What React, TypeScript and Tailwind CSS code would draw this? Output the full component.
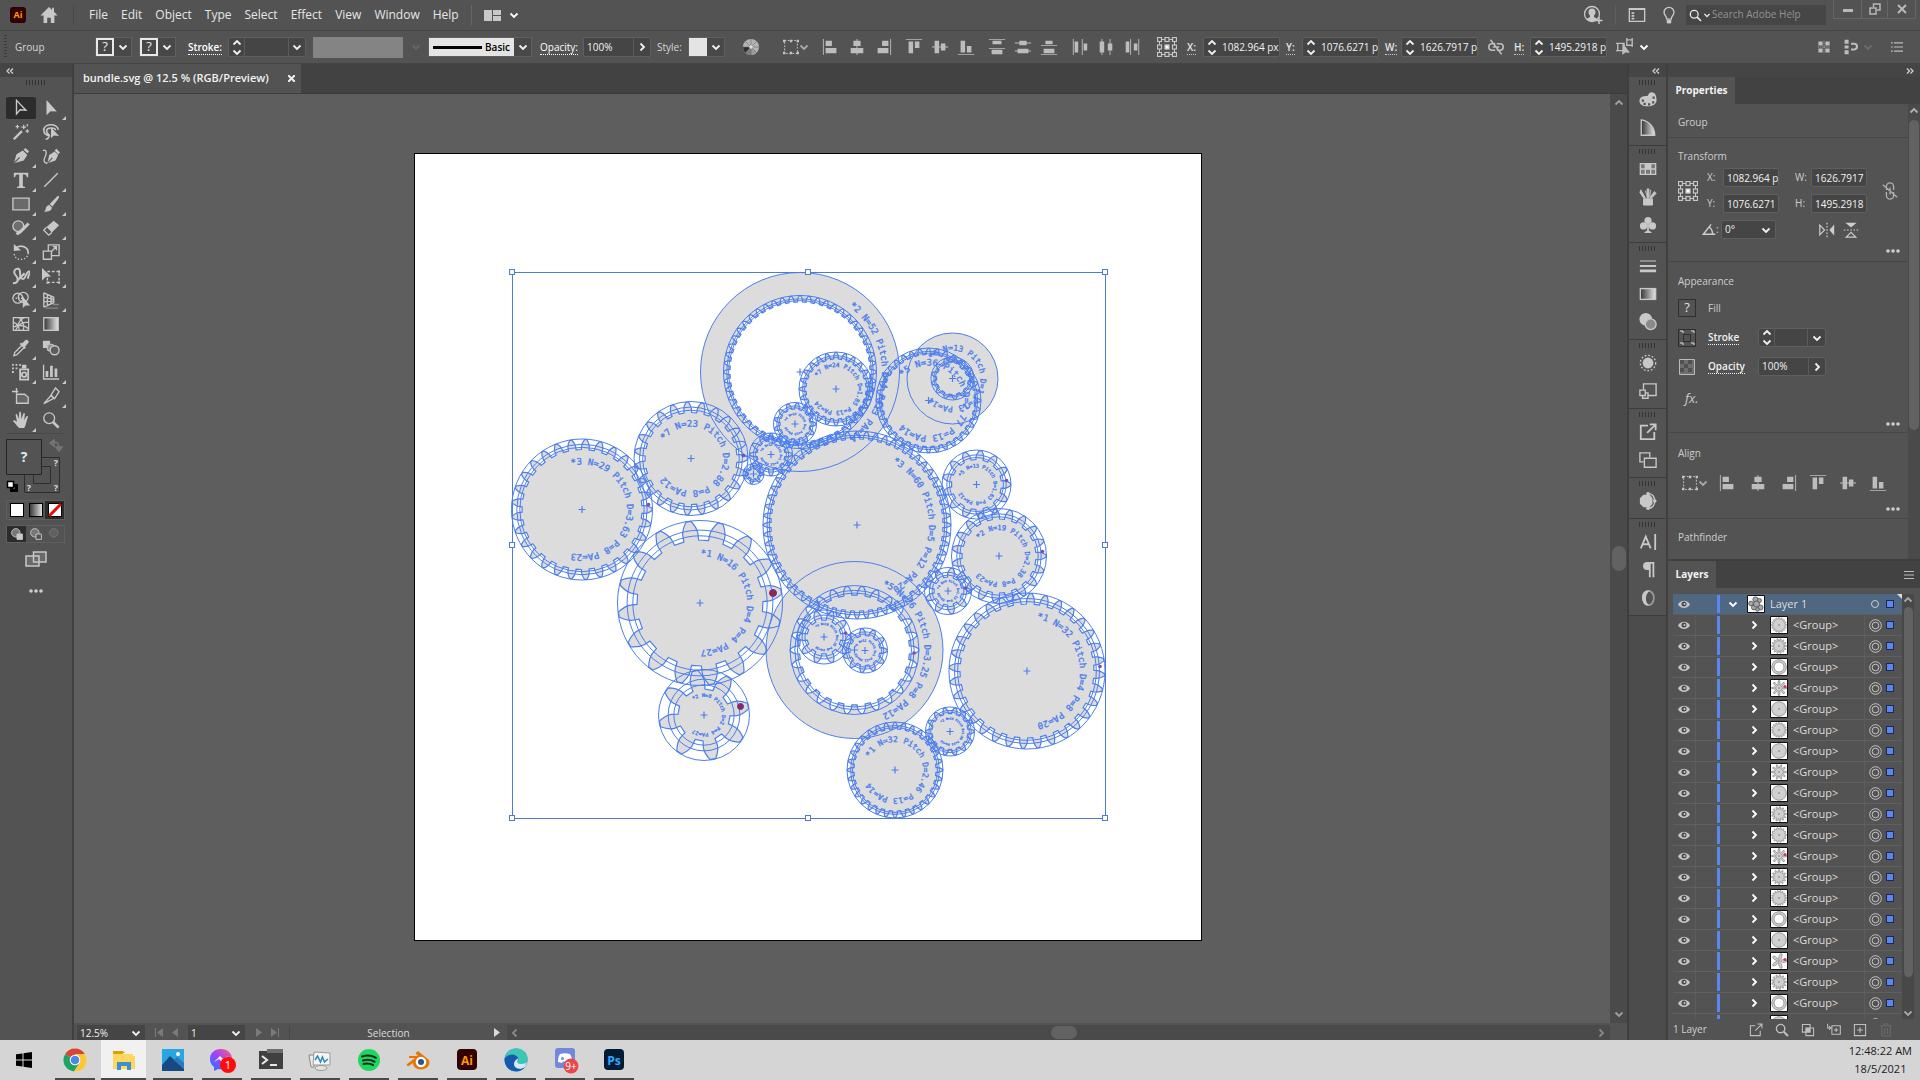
import React from "react";

/* ---------- shared icon helpers ---------- */

type IconProps = { size?: number; className?: string; children: React.ReactNode };

function Icon({ size = 20, className = "", children }: IconProps) {
  return (
    <svg
      width={size}
      height={size}
      viewBox="0 0 20 20"
      fill="none"
      stroke="currentColor"
      strokeWidth="1.5"
      className={"shrink-0 " + className}
      aria-hidden="true"
    >
      {children}
    </svg>
  );
}

const F = { fill: "currentColor", stroke: "none" };

function Chevron({ dir = "down", className = "" }: { dir?: "down" | "up" | "right" | "left"; className?: string }) {
  const d = {
    down: "M1.5 3.5 5 7l3.500-3.500",
    up: "M1.500 6.500 5 3l3.500 3.500",
    right: "M3.500 1.500 7 5 3.500 8.500",
    left: "M6.500 1.500 3 5l3.500 3.500",
  }[dir];
  return (
    <svg width="10" height="10" viewBox="0 0 10 10" fill="none" stroke="currentColor" strokeWidth="1.8" className={"shrink-0 " + className} aria-hidden="true">
      <path d={d} />
    </svg>
  );
}

function Collapse({ right = false }: { right?: boolean }) {
  return (
    <svg width="8" height="6" viewBox="0 0 8 6" fill="none" stroke="#d0d0d0" strokeWidth="1.3" aria-hidden="true">
      <path d={right ? "M1 .5 3.500 3 1 5.500M4.500 .5 7 3 4.500 5.500" : "M3.500 .5 1 3l2.500 2.500M7 .5 4.500 3 7 5.500"} />
    </svg>
  );
}

function Grip({ n = 6 }: { n?: number }) {
  return (
    <span className="flex gap-px" aria-hidden="true">
      {Array.from({ length: n }, (_, i) => (
        <span key={i} className="h-[5px] w-[2px] border-l border-[#343434]" />
      ))}
    </span>
  );
}

function RefPoint({ size = 20 }: { size?: number }) {
  const pts = [2.5, 10, 17.5];
  return (
    <Icon size={size}>
      <path d="M2.500 2.500h15v15h-15z" strokeWidth="1" />
      {pts.map((x) =>
        pts.map((y) => (
          <rect key={x + "-" + y} x={x - 2} y={y - 2} width="4" height="4" strokeWidth="1.200" fill={x === 10 && y === 10 ? "#fff" : "#535353"} />
        )),
      )}
    </Icon>
  );
}

const alignPaths: Record<string, [string, string]> = {
  left: ["Horizontal Align Left", "M1 1h1v18H1zM4 3h7v6H4zM4 11h12v6H4z"],
  hcenter: ["Horizontal Align Center", "M9.500 1h1v18h-1zM6 3h8v6H6zM3 11h14v6H3z"],
  right: ["Horizontal Align Right", "M18 1h1v18h-1zM9 3h7v6H9zM4 11h12v6H4z"],
  top: ["Vertical Align Top", "M1 1h18v1H1zM4 4h5v13H4zM11 4h5v7h-5z"],
  vcenter: ["Vertical Align Center", "M1 9.500h18v1H1zM4 3h5v14H4zM11 6h5v8h-5z"],
  bottom: ["Vertical Align Bottom", "M1 18h18v1H1zM4 3h5v13H4zM11 9h5v7h-5z"],
  dtop: ["Distribute Top", "M1 1h18v1H1zM5 3h10v4H5zM1 11h18v1H1zM4 13h12v5H4z"],
  dvc: ["Distribute Vertical Center", "M1 5h18v1H1zM6 3h8v5H6zM1 14h18v1H1zM4 12h12v5H4z"],
  dbottom: ["Distribute Bottom", "M1 8h18v1H1zM6 3h8v4H6zM1 18h18v1H1zM4 12h12v5H4z"],
  dleft: ["Distribute Left", "M2 1h1v18H2zM4 4h4v12H4zM12 1h1v18h-1zM14 6h4v8h-4z"],
  dhc: ["Distribute Horizontal Center", "M5 1h1v18H5zM3 4h5v12H3zM14 1h1v18h-1zM12 6h5v8h-5z"],
  dright: ["Distribute Right", "M8 1h1v18H8zM3 4h4v12H3zM17 1h1v18h-1zM12 6h4v8h-4z"],
};

function AlignButton({ kind }: { kind: string }) {
  return (
    <button type="button" aria-label={alignPaths[kind][0]} className="flex w-[18px] items-center justify-center text-[#bdbdbd]">
      <Icon size={18}>
        <path d={alignPaths[kind][1]} {...F} />
      </Icon>
    </button>
  );
}

function AlignTo() {
  return (
    <button type="button" aria-label="Align To" className="flex items-center text-[#c2c2c2]">
      <Icon size={16}>
        <path d="M2 2h16v16H2z" strokeWidth="1.300" strokeDasharray="2 2" />
        <path d="M0 1h3v3H0zM8.500 1h3v3h-3zM17 1h3v3h-3zM0 16h3v3H0zM8.500 16h3v3h-3zM17 16h3v3h-3z" {...F} />
      </Icon>
      <Chevron className="text-[#a8a8a8]" />
    </button>
  );
}

const fieldBox = "rounded-[2px] border border-[#5f5f5f] bg-[#454545]";

function Spinner() {
  return (
    <span className="flex w-[15px] flex-col items-center justify-center text-[#f0f0f0]">
      <button type="button" aria-label="Increase" className="flex h-[9px] items-center"><Chevron dir="up" /></button>
      <button type="button" aria-label="Decrease" className="flex h-[9px] items-center"><Chevron /></button>
    </span>
  );
}

function DropDown({ label, value, className = "" }: { label: string; value: string; className?: string }) {
  return (
    <span className={"grid items-center text-[#f0f0f0] " + className}>
      <select aria-label={label} defaultValue={value} className="col-start-1 row-start-1 h-full w-full appearance-none bg-transparent pl-[3px] outline-none">
        <option value={value}>{value}</option>
      </select>
      <span className="pointer-events-none col-start-1 row-start-1 flex w-[18px] items-center justify-center justify-self-end">
        <Chevron />
      </span>
    </span>
  );
}

function Coord({ label, value }: { label: string; value: string }) {
  const id = "bar-" + label;
  return (
    <span className="flex items-center">
      <label htmlFor={id} className="w-[16px] border-dotted border-[#c8c8c8] font-semibold text-[#e4e4e4]">
        <span className="border-b border-dotted border-[#c8c8c8]">{label}:</span>
      </label>
      <span className={"flex h-5 w-[77px] " + fieldBox}>
        <Spinner />
        <input id={id} defaultValue={value} className="w-0 flex-1 bg-transparent pl-[3px] text-[#f2f2f2] outline-none" />
      </span>
    </span>
  );
}

/* ---------- top bars ---------- */

const menus = ["File", "Edit", "Object", "Type", "Select", "Effect", "View", "Window", "Help"];

function MenuBar() {
  return (
    <header className="flex h-[30px] shrink-0 items-center bg-[#535353] text-xs text-[#e6e6e6]">
      <span className="ml-[10px] flex h-4 w-4 items-center justify-center rounded-[3px] bg-[#330000] text-[9px] font-bold text-[#ff9a00]">Ai</span>
      <button type="button" aria-label="Home" className="ml-[14px] text-[#c8c8c8]">
        <Icon size={18}>
          <path d="M10 1 .5 10.500H4V19h4v-6h4v6h4v-8.500h3.500L15.500 6.500V2h-2v2.500z" {...F} />
        </Icon>
      </button>
      <span className="ml-[15px] h-5 w-px bg-[#484848]" />
      <nav className="ml-[15px] flex gap-[13px] pb-px">
        {menus.map((m) => (
          <button type="button" key={m}>{m}</button>
        ))}
      </nav>
      <span className="ml-3 h-5 w-px bg-[#666]" />
      <button type="button" aria-label="Arrange Documents" className="ml-3 flex items-center gap-2 text-[#c8c8c8]">
        <svg width="17" height="11" viewBox="0 0 17 11" fill="currentColor" aria-hidden="true"><path d="M0 0h8v11H0zM9 0h8v5H9zM9 6h8v5H9z" /></svg>
        <Chevron className="text-white" />
      </button>
      <div className="ml-auto flex h-full items-center text-[#c8c8c8]">
        <button type="button" aria-label="Account">
          <Icon size={20}>
            <circle cx="9" cy="9" r="7.500" strokeWidth="1.300" />
            <path d="M9 3.500c2.300 0 3.500 1.600 3.500 3.800 0 1.500-.7 2.600-1.500 3.300v1.500c1 .6 3 1 3 2.200L9 17l-5-2.500c0-1.200 2-1.800 3-2.400v-1.500c-.8-.7-1.500-1.800-1.500-3.300C5.500 5.100 6.700 3.500 9 3.500z" {...F} />
            <path d="M16 12v7M12.500 15.500h7" strokeWidth="1.500" />
          </Icon>
        </button>
        <span className="mx-3 h-5 w-px bg-[#5e5e5e]" />
        <button type="button" aria-label="Workspace layout">
          <Icon size={18}>
            <path d="M1.500 3h17v14h-17zM1.500 3.800h17" />
            <path d="M4 7h3v2H4zM4 10h3v2H4zM4 13h3v2H4z" {...F} />
          </Icon>
        </button>
        <button type="button" aria-label="Learn" className="ml-[14px]">
          <Icon size={18}>
            <path d="M7.500 14.500c0-3-3-4-3-7.500a5.500 5.500 0 0 1 11 0c0 3.500-3 4.500-3 7.500z" />
            <path d="M7.500 15.500h5v3l-1 1h-3l-1-1z" {...F} />
          </Icon>
        </button>
        <label className="ml-2 flex h-5 w-[140px] items-center bg-[#464646] pl-[3px]">
          <Icon size={13} className="text-[#e8e8e8]"><circle cx="8" cy="8" r="6" strokeWidth="2" /><path d="m12.500 12.500 6 6" strokeWidth="2.500" /></Icon>
          <Chevron className="scale-75 text-[#e8e8e8]" />
          <input aria-label="Search Adobe Help" placeholder="Search Adobe Help" className="w-0 flex-1 bg-transparent text-[10px] text-white outline-none placeholder:text-[#929292]" />
        </label>
        <div className="ml-[7px] mr-1 flex h-[19px] self-start border border-t-0 border-[#666] text-[#b8b8b8]">
          <button type="button" aria-label="Minimize" className="flex w-[27px] items-center justify-center"><svg width="10" height="10" aria-hidden="true"><path d="M0 5h10v3H0z" fill="currentColor" /></svg></button>
          <button type="button" aria-label="Restore" className="flex w-[27px] items-center justify-center border-x border-[#666]"><svg width="12" height="12" fill="none" stroke="currentColor" strokeWidth="1.500" aria-hidden="true"><path d="M1 5h6v6H1zM4.500 4V1H11v6H8" /></svg></button>
          <button type="button" aria-label="Close" className="flex w-[27px] items-center justify-center"><svg width="10" height="10" fill="none" stroke="currentColor" strokeWidth="2" aria-hidden="true"><path d="m1 1 8 8M9 1 1 9" /></svg></button>
        </div>
      </div>
    </header>
  );
}

function Swatch({ label, children, light = false }: { label: string; children?: React.ReactNode; light?: boolean }) {
  return (
    <button type="button" aria-label={label} className="flex h-5 border border-[#5f5f5f] bg-[#484848]">
      <span className={"flex h-full w-[18px] items-center justify-center border-2 text-[13px] " + (light ? "border-[#e4e4e4] bg-[#e4e4e4]" : "border-[#e8e8e8] bg-[#484848] text-[#e8e8e8]")}>{children}</span>
      <span className="flex h-full w-[17px] items-center justify-center text-[#f0f0f0]"><Chevron /></span>
    </button>
  );
}

function Sep() {
  return <span className="h-6 w-px bg-[#4a4a4a]" />;
}

function ControlBar() {
  return (
    <div className="flex h-[34px] shrink-0 items-center border-y border-[#444] bg-[#535353] text-[10px] text-[#d6d6d6]">
      <span className="ml-1 h-6 w-[11px] bg-[repeating-linear-gradient(#3a3a3a_0_1px,transparent_1px_3px)] bg-[length:3px_100%] bg-no-repeat" />
      <span className="w-20">Group</span>
      <Swatch label="Fill">?</Swatch>
      <span className="ml-[7px]"><Swatch label="Stroke color">?</Swatch></span>
      <label htmlFor="bar-stroke" className="ml-3 w-10 font-semibold text-white"><span className="border-b border-dotted">Stroke:</span></label>
      <span className={"flex h-5 w-[78px] " + fieldBox}>
        <Spinner />
        <input id="bar-stroke" className="w-0 flex-1 border-x border-[#5a5a5a] bg-transparent outline-none" />
        <button type="button" aria-label="Stroke weights" className="flex w-4 items-center justify-center text-[#f0f0f0]"><Chevron /></button>
      </span>
      <span className="ml-[7px] h-[21px] w-[90px] bg-[#848484]" />
      <span className="flex w-[25px] justify-center text-[#656565]"><Chevron /></span>
      <button type="button" aria-label="Brush definition" className="flex h-5 w-[104px] border border-[#5f5f5f] bg-[#484848]">
        <span className="flex h-full flex-1 items-center justify-between bg-[#e4e4e4] px-1 font-semibold text-black"><span className="h-[3px] w-[49px] bg-black" />Basic</span>
        <span className="flex h-full w-[17px] items-center justify-center text-[#f0f0f0]"><Chevron /></span>
      </button>
      <label htmlFor="bar-opacity" className="ml-2 w-[43px] text-white"><span className="border-b border-dotted">Opacity:</span></label>
      <span className={"flex h-5 w-[68px] " + fieldBox}>
        <input id="bar-opacity" defaultValue="100%" className="w-0 flex-1 bg-transparent pl-[3px] text-[#f2f2f2] outline-none" />
        <button type="button" aria-label="Opacity slider" className="flex w-[17px] items-center justify-center border-l border-[#5a5a5a] text-[#f0f0f0]"><Chevron dir="right" /></button>
      </span>
      <span className="ml-[6px] w-[31px]">Style:</span>
      <Swatch label="Graphic style" light />
      <span className="ml-2"><Sep /></span>
      <button type="button" aria-label="Recolor artwork" className="ml-[9px] text-[#c8c8c8]">
        <Icon size={18}>
          <circle cx="10" cy="10" r="9" fill="#b4b4b4" stroke="none" />
          <path d="M10 10H1A9 9 0 0 0 4 16.700z" fill="#2e2e2e" stroke="none" />
          <path d="M10 10 4 16.700A9 9 0 0 0 10 19z" fill="#7c7c7c" stroke="none" />
          <path d="M10 10v9a9 9 0 0 0 6.400-2.600z" fill="#9a9a9a" stroke="none" />
          <path d="M10 1v18M1 10h18M3.600 3.600l12.800 12.800M16.400 3.600 3.600 16.400" stroke="#6c6c6c" strokeWidth=".7" />
          <circle cx="10" cy="10" r="2" fill="#ddd" stroke="none" />
        </Icon>
      </button>
      <span className="ml-[10px]"><Sep /></span>
      <span className="ml-[13px]"><AlignTo /></span>
      <div className="ml-[13px] flex gap-[13px]">
        {[["left", "hcenter", "right"], ["top", "vcenter", "bottom"], ["dtop", "dvc", "dbottom"], ["dleft", "dhc", "dright"]].map((g) => (
          <span key={g[0]} className="flex gap-2">
            {g.map((k) => <AlignButton key={k} kind={k} />)}
          </span>
        ))}
      </div>
      <span className="ml-3"><Sep /></span>
      <button type="button" aria-label="Reference point" className="ml-1 mr-[10px] text-[#c6c6c6]"><RefPoint /></button>
      <div className="flex items-center gap-[6px]">
        <Coord label="X" value="1082.964 px" />
        <Coord label="Y" value="1076.6271 p" />
        <Coord label="W" value="1626.7917 p" />
        <button type="button" aria-label="Constrain proportions" className="mx-1 text-[#bdbdbd]">
          <Icon size={16}><path d="M9 6H5a4 4 0 0 0 0 8h4M11 6h4a4 4 0 0 1 0 8h-4M6 10h8M3 1l14 18" strokeWidth="2" /></Icon>
        </button>
        <Coord label="H" value="1495.2918 p" />
      </div>
      <button type="button" aria-label="Isolate selected" className="ml-[9px] flex items-center gap-[5px] text-[#bdbdbd]">
        <Icon size={18}><path d="M2 6h7v8H2zM12 2h6v6h-6zM0 6h2M0 14h2M18 0v2M18 8v2M12 0v2" /><path d="M7 5v14l3.500-3 5 .5z" {...F} /></Icon>
        <Chevron className="text-white" />
      </button>
      <div className="ml-auto mr-[17px] flex items-center text-[#bdbdbd]">
        <button type="button" aria-label="Snap to grid"><Icon size={14}><path d="M2 2h6v6H2zM12 2h6v6h-6zM2 12h6v6H2zM12 12h6v6h-6z" {...F} /><path d="M10 1v18M1 10h18" strokeWidth="1" strokeDasharray="2 1" /></Icon></button>
        <button type="button" aria-label="Snap options" className="ml-3 flex items-center gap-1"><Icon size={16}><path d="M2 1h5v5H2zM2 8h5v4H2zM2 14h5v5H2z" {...F} /><path d="M10 6h4a3.500 3.500 0 0 1 0 7h-4" strokeWidth="2.500" /></Icon><Chevron className="text-[#6b6b6b]" /></button>
        <button type="button" aria-label="Bar menu" className="ml-[18px]"><Icon size={12}><path d="M0 3h3M0 10h3M0 17h3M5 3h15M5 10h15M5 17h15" strokeWidth="2" /></Icon></button>
      </div>
    </div>
  );
}

/* ---------- tool panel ---------- */

const arrow = "M5 1v17l4.500-4.500 7 .5z";

const tools: [string, React.ReactNode, boolean][] = [
  ["Selection", <path key="a" d="M5 1.500v15l4-4.500 6.500.5z" />, false],
  ["Direct Selection", <path key="a" d={arrow} {...F} />, true],
  ["Magic Wand", <g key="a"><path d="m2 18 9-9" strokeWidth="2.500" /><path d="M13 2v5M10.500 4.500h5M17 7v4M15 9h4M6 2v4M4 4h4M17 1v3" strokeWidth="1.300" /></g>, false],
  ["Lasso", <g key="a"><path d="M9 14c-5 0-7-3-7-6 0-4 4-6 8-6s8 2 8 5.500M5 9c0-2 2-3.500 5-3.500s5 1 5 2.500M5 9c0 3 3 3 3 5s-2 4-4 4" strokeWidth="1.800" /><path d="M10 5v12l3-3 6 .5z" {...F} /></g>, false],
  ["Pen", <g key="a"><path d="M2 18 5 8l7-4 5 5-4 6zM13 3l2-2 4 4-2 2z" {...F} /><path d="m2.500 17.500 6-6" stroke="#535353" strokeWidth="1.200" /></g>, true],
  ["Curvature", <g key="a"><path d="M6 18 8 9l6-4 4 4-3 6zM14 4l2-2 4 4-2 2z" {...F} /><path d="m6.500 17.500 5-5.500" stroke="#535353" strokeWidth="1.200" /><path d="M1 4c5-2 4 4 2 8s0 6 3 6" /></g>, false],
  ["Type", <path key="a" d="M2 2h16v5h-1.500C16 4.500 15.500 4 12 4v12c0 1 .5 1.500 2.500 1.500V19h-9v-1.500C7.500 17.500 8 17 8 16V4C4.500 4 4 4.500 3.500 7H2z" {...F} />, true],
  ["Line Segment", <path key="a" d="M2.500 17.500 17.500 2.500" strokeWidth="1.500" />, true],
  ["Rectangle", <path key="a" d="M1 3.500h18v13H1z" fill="#6a6a6a" />, true],
  ["Paintbrush", <g key="a"><path d="M18.500 1c1 1 0 2.500-1 4l-6 8-3-3 7-7c1-1 2-2.500 3-2zM8 11l3 3c0 3-3 5-9 4.500 2.500-1 1.500-3 3-5.500C6 11.500 7 11 8 11z" {...F} /></g>, true],
  ["Shaper", <g key="a"><circle cx="7" cy="8" r="6" fill="#6e6e6e" /><path d="m18.500 5-9 9-3 2-1.500-1" strokeWidth="3.500" /></g>, true],
  ["Eraser", <g key="a"><path d="m13 2 6 5-8 8-6-6z" {...F} /><path d="m5 9-3 3.500L7.500 18l3.500-3" /></g>, true],
  ["Rotate", <g key="a"><path d="M4 6c5-5 14-2 14 5" strokeWidth="2" /><path d="M18 11c0 9-15 10-15.500 1" strokeWidth="1.500" strokeDasharray="1.500 2" /><path d="M2 1v8l8-1z" {...F} /></g>, true],
  ["Scale", <path key="a" d="M1.500 9h9v9h-9zM7 9V2h12v12h-8M10 10l6-6M12 4h4v4" />, true],
  ["Width", <g key="a"><path d="M1 18c7 0 6-6 3-9S3 1 7 2s0 9 4 11 5-9 8-8-2 4-1 8" strokeWidth="2.200" /><path d="m6 15 8-8" strokeWidth="2.500" /></g>, true],
  ["Free Transform", <g key="a"><path d="M6 5h13v12H6z" strokeDasharray="3 2" /><path d="M18 4h2.500v2.500H18zM18 16h2.500v2.500H18zM5 16h2.500v2.500H5z" {...F} /><path d="M0 1v14l4-4 6-.5z" {...F} /></g>, true],
  ["Shape Builder", <g key="a"><circle cx="6.500" cy="8" r="5.500" /><circle cx="12.500" cy="7" r="5.500" /><path d="M4 8h9" strokeDasharray="1.500 1.500" /><path d="M12 6v13l3-3 5 0z" {...F} /></g>, true],
  ["Perspective Grid", <g key="a"><path d="M2 2v16M2 2l11 5v6L2 18M2 7l11 2M2 12l11-1M6 4v12M10 6v8" /><path d="M4 19h14M12 15h7" stroke="#888" /></g>, true],
  ["Mesh", <path key="a" d="M1.500 3h17v14h-17zM1.500 13c7 1 5-9 13-10M4 17c2-5 6-9 14-9M8 17c0-6-4-8-6.500-9M12 17c2-2 2-8-4-14M7 12c5-1 8 0 11 3" strokeWidth="1.400" />, false],
  ["Gradient", <g key="a"><rect x="2" y="3" width="16" height="14" fill="url(#ramp)" /></g>, false],
  ["Eyedropper", <g key="a"><path d="m11 5 4-4c2-1 4 1 3.500 3l-4 4.500 1 1-1.500 1.500L8.500 5.500 10 4z" {...F} /><path d="m11 7-8 8-1 3.500 3.500-1 8-8" /></g>, true],
  ["Blend", <g key="a"><path d="M1 2h8v8H1z" {...F} /><rect x="6" y="6" width="7" height="7" rx="2.500" fill="#8c8c8c" stroke="#bbb" /><circle cx="14" cy="12.500" r="5" fill="#5d5d5d" /></g>, false],
  ["Symbol Sprayer", <g key="a"><path d="M9 7h9v11.500H9z" strokeWidth="2" /><circle cx="13.500" cy="13" r="2.500" strokeWidth="2" /><path d="M11 2h5v4h-5zM0 1h2v2H0zM4 1h2v2H4zM8 1h2v2H8zM0 5h2v2H0zM4 5h2v2H4zM0 9h2v2H0z" {...F} /></g>, true],
  ["Column Graph", <path key="a" d="M1 2h1.500v15H19v1.500H1zM4 9h3v6.500H4zM9 3h3v12.500H9zM14 6h3v9.500h-3z" {...F} />, true],
  ["Artboard", <path key="a" d="M5 1v6M0 5h7M7 8h7l4 3.500V18H5V8z" fill="#666" />, false],
  ["Slice", <g key="a"><path d="m2 18.500 8-9 3 3zM10 9l5-8 4 4-5 8z" /></g>, true],
  ["Hand", <path key="a" d="M8 19c-2-2-4-5-7-8 1-1.500 2.500-.5 4.500 1L4 4.500c0-1.500 1.600-1.500 2 0L7.500 9 8 2c0-1.500 2-1.500 2 0l.5 7L12.500 3c.3-1.200 2-.8 1.800.5L13.500 10l2.500-4c.7-1 2-.3 1.700.8L15.500 14c-.5 2.500-1 3.500-2 5z" {...F} />, true],
  ["Zoom", <g key="a"><circle cx="8" cy="8" r="6" /><path d="m12.500 12.500 6 6" strokeWidth="3" /></g>, false],
];

function ToolPanel() {
  return (
    <aside className="flex w-[74px] shrink-0 flex-col border-r-2 border-[#404040] bg-[#535353] text-[#c8c8c8]">
      <div className="flex h-[13px] shrink-0 items-center bg-[#454545] pl-[6px]"><Collapse /></div>
      <div className="flex h-[19px] justify-center pt-[3px]"><Grip n={7} /></div>
      <div className="ml-[6px] grid w-[60px] grid-cols-2">
        {tools.map(([name, art, more], i) => (
          <button
            type="button"
            key={name}
            aria-label={name + " Tool"}
            className={"grid h-6 w-[30px] place-items-center rounded-[3px] " + (i === 0 ? "bg-[#2c2c2c] bg-clip-content py-px" : "")}
          >
            <Icon size={18} className="col-start-1 row-start-1">{art}</Icon>
            {more && (
              <svg width="4" height="4" className="col-start-1 row-start-1 self-end justify-self-end" aria-hidden="true"><path d="M4 0v4H0z" fill="currentColor" /></svg>
            )}
          </button>
        ))}
      </div>
      <div className="mx-[7px] mt-px h-[6px] border-t border-[#484848]" />
      <svg width="60" height="58" className="ml-[6px]" role="img" aria-label="Fill and stroke">
        <path d="M18.500 18.500h35v35h-35zM27.500 27.500h17v17h-17z" fill="none" stroke="#2e2e2e" />
        <path d="M.5 .5h35v35H.5z" fill="#535353" stroke="#262626" />
        <path d="M45 4c6-2 8 0 8 6M48 1l-4 3 4 3zM50 8h6l-3 4z" fill="none" stroke="#777" strokeWidth="1.500" />
        <text x="18" y="23" textAnchor="middle" fontSize="14" fontWeight="700" fill="#dcecf8">?</text>
        <text x="50" y="27" textAnchor="middle" fontSize="9" fontWeight="700" fill="#ddd">?</text>
        <text x="23" y="52" textAnchor="middle" fontSize="9" fontWeight="700" fill="#ddd">?</text>
        <text x="50" y="52" textAnchor="middle" fontSize="9" fontWeight="700" fill="#ddd">?</text>
        <path d="M5.500 46.500h5v5h-5z" fill="none" stroke="#000" strokeWidth="3" />
        <path d="M1.500 42.500h6v6h-6z" fill="#fff" stroke="#000" strokeWidth="1.500" />
      </svg>
      <div className="ml-[6px] mt-[3px] flex h-5 w-[59px] border border-[#5f5f5f]">
        {["Color", "Gradient", "None"].map((n, i) => (
          <button type="button" key={n} aria-label={n} className={"flex flex-1 items-center justify-center " + (i === 2 ? "bg-[#2c2c2c]" : "")}>
            <svg width="14" height="14" aria-hidden="true">
              <rect x=".5" y=".5" width="13" height="13" fill={i === 1 ? "url(#ramp)" : "#fff"} stroke="#000" />
              {i === 2 && <path d="m1 13 12-12" stroke="#e01010" strokeWidth="3" />}
            </svg>
          </button>
        ))}
      </div>
      <div className="ml-[6px] mt-[5px] flex h-[18px] w-[59px] border border-[#5f5f5f]">
        {["Draw Normal", "Draw Behind", "Draw Inside"].map((n, i) => (
          <button type="button" key={n} aria-label={n} className={"flex flex-1 items-center justify-center " + (i === 0 ? "bg-[#2c2c2c]" : i === 2 ? "text-[#777]" : "")}>
            <Icon size={12}>
              <circle cx="8" cy="8" r="7" fill={i === 2 ? "#606060" : "#777"} />
              {i < 2 && <path d="M10 10h9v9h-9z" fill={i === 0 ? "currentColor" : "#535353"} />}
            </Icon>
          </button>
        ))}
      </div>
      <button type="button" aria-label="Screen mode" className="mt-2 flex justify-center">
        <svg width="22" height="16" fill="#6a6a6a" stroke="#c8c8c8" strokeWidth="1.500" aria-hidden="true"><path d="M1 5h13v10H1zM8.500 1H21v10H8.500z" /></svg>
      </button>
      <button type="button" aria-label="Edit toolbar" className="mt-[22px] flex justify-center"><Dots /></button>
    </aside>
  );
}

function Dots() {
  return <svg width="14" height="4" fill="#cfcfcf" aria-hidden="true"><circle cx="2" cy="2" r="1.800" /><circle cx="7" cy="2" r="1.800" /><circle cx="12" cy="2" r="1.800" /></svg>;
}

/* ---------- artwork ---------- */

type Gear = { x: number; y: number; ro: number; ri: number; n: number; ring?: number; text?: string; tr?: number; fs?: number; ph?: number };

function gearPath(x: number, y: number, ro: number, ri: number, n: number, phase = 0) {
  const s = (Math.PI * 2) / n;
  const p = (a: number, r: number) => (x + r * Math.cos(a)).toFixed(2) + " " + (y + r * Math.sin(a)).toFixed(2);
  const h = ro - ri;
  let d = "";
  for (let i = 0; i < n; i++) {
    const a = i * s + phase;
    d += (i ? "L" : "M") + p(a - 0.3 * s, ri) + "L" + p(a - 0.28 * s, ri + h * 0.35);
    d += "Q" + p(a - 0.25 * s, ri + h * 0.65) + " " + p(a - 0.08 * s, ro);
    d += "L" + p(a + 0.08 * s, ro) + "Q" + p(a + 0.25 * s, ri + h * 0.65) + " " + p(a + 0.28 * s, ri + h * 0.35);
    d += "L" + p(a + 0.3 * s, ri);
  }
  return d + "Z";
}

const circlePath = (x: number, y: number, r: number) => `M${x - r} ${y}A${r} ${r} 0 1 1 ${x + r} ${y}A${r} ${r} 0 1 1 ${x - r} ${y}`;

const gears: Gear[] = [
  { x: 800, y: 372, ro: 76, ri: 70, n: 52, ring: 99.5, text: "*2 N=52 Pitch D=4 P=13 PA=14", tr: 82, fs: 9 },
  { x: 854.5, y: 650, ro: 64, ri: 55, n: 26, ring: 88.5, text: "*5 N=26 Pitch D=3.25 P=8 PA=12", tr: 70, fs: 9 },
  { x: 952.5, y: 378.5, ro: 21, ri: 16, n: 13, ring: 45.5, text: "*6 N=13 Pitch D=1 P=13 PA=14", tr: 28, fs: 8 },
  { x: 582, y: 509.5, ro: 70, ri: 60, n: 29, text: "*3 N=29 Pitch D=3.63 P=8 PA=23", tr: 45, fs: 9 },
  { x: 691, y: 458.5, ro: 56.5, ri: 46, n: 23, text: "*7 N=23 Pitch D=2.88 P=8 PA=12", tr: 32, fs: 9 },
  { x: 836, y: 389, ro: 36.5, ri: 30, n: 24, text: "*7 N=24 Pitch D=1.85 P=13 PA=24", tr: 22, fs: 6 },
  { x: 795, y: 424, ro: 21, ri: 15, n: 13, text: "*4 N=13 Pitch D=1 P=13 PA=24", tr: 9, fs: 3 },
  { x: 771, y: 454.5, ro: 21, ri: 14, n: 12, text: "*6 N=12 Pitch D=1 P=12 PA=20", tr: 9, fs: 3 },
  { x: 753.5, y: 474, ro: 10, ri: 5, n: 7 },
  { x: 857, y: 525, ro: 93.5, ri: 86, n: 60, text: "*3 N=60 Pitch D=5 P=12 PA=20", tr: 72, fs: 9 },
  { x: 928.5, y: 400.5, ro: 52, ri: 46, n: 36, text: "*5 N=36 Pitch D=2.77 P=13 PA=14", tr: 35, fs: 9 },
  { x: 976.5, y: 484.5, ro: 34, ri: 25, n: 13, text: "*5 N=13 Pitch D=1.63 P=8 PA=12", tr: 17, fs: 5 },
  { x: 999, y: 556, ro: 47, ri: 37, n: 19, text: "*2 N=19 Pitch D=2.38 P=8 PA=23", tr: 26, fs: 7 },
  { x: 948, y: 591, ro: 23, ri: 14, n: 9, text: "*4 N=9 Pitch D=1.13 P=8 PA=20", tr: 9, fs: 3 },
  { x: 1027, y: 671, ro: 77.5, ri: 67, n: 32, text: "*1 N=32 Pitch D=4 P=8 PA=20", tr: 53, fs: 9, ph: 0.05 },
  { x: 700, y: 603, ro: 82, ri: 63, n: 16, text: "*1 N=16 Pitch D=4 P=4 PA=27", tr: 47, fs: 9, ph: -0.14 },
  { x: 704, y: 715, ro: 45, ri: 26, n: 8, text: "*2 N=8 Pitch D=2 P=4 PA=27", tr: 18, fs: 5, ph: -0.2 },
  { x: 824, y: 637, ro: 26.5, ri: 17, n: 10, text: "*3 N=10 Pitch D=1.25 P=8 PA=20", tr: 12, fs: 3 },
  { x: 865, y: 650.5, ro: 22, ri: 15, n: 11, text: "*6 N=11 Pitch D=1 P=11 PA=20", tr: 9, fs: 3 },
  { x: 895, y: 770, ro: 47.5, ri: 41, n: 32, text: "*1 N=32 Pitch D=2.46 P=13 PA=14", tr: 28, fs: 8 },
  { x: 950, y: 731.5, ro: 24, ri: 18, n: 14, text: "*2 N=14 Pitch D=1.08 P=13 PA=14", tr: 12, fs: 3 },
];

const handles: [number, number][] = [[512, 272], [808, 272], [1105, 272], [512, 545], [1105, 545], [512, 818], [808, 818], [1105, 818]];

function Artwork() {
  return (
    <svg width="788" height="788" viewBox="414 153 788 788" className="block" role="img" aria-label="bundle.svg artwork: interlocking gears">
      <rect x="414.500" y="153.500" width="787" height="787" fill="#fff" stroke="#000" />
      <g fill="#dcdcdc" fillRule="evenodd">
        {gears.map((g, i) => (
          <path key={i} d={gearPath(g.x, g.y, g.ro, g.ri, g.n, g.ph) + (g.ring ? circlePath(g.x, g.y, g.ring) : "")} />
        ))}
      </g>
      <g fill="none" stroke="#4c7eee" strokeWidth="1">
        {gears.map((g, i) => {
          const h = g.ro - g.ri;
          return (
            <g key={i}>
              <path d={gearPath(g.x, g.y, g.ro, g.ri, g.n, g.ph)} strokeWidth="1.200" />
              <circle cx={g.x} cy={g.y} r={g.ro + 0.5} />
              <circle cx={g.x} cy={g.y} r={g.ri + h * 0.52} />
              <circle cx={g.x} cy={g.y} r={g.ri + h * 0.22} />
              {g.ring && <circle cx={g.x} cy={g.y} r={g.ring} />}
              <path d={`M${g.x - 3.5} ${g.y}h7M${g.x} ${g.y - 3.5}v7`} strokeWidth="1.200" />
              {g.text && <path id={"arc" + i} d={circlePath(g.x, g.y, g.tr!)} stroke="none" />}
            </g>
          );
        })}
      </g>
      <g fill="#4c7eee" stroke="#4c7eee" strokeWidth=".35" fontFamily="'DejaVu Sans Mono', monospace">
        {gears.map((g, i) =>
          g.text ? (
            <text key={i} fontSize={g.fs} textAnchor="middle">
              <textPath href={"#arc" + i} startOffset="50%">{g.text}</textPath>
            </text>
          ) : null,
        )}
      </g>
      <g fill="#b01838" stroke="#5a3c9a">
        <circle cx="773" cy="593" r="3.500" />
        <circle cx="740.500" cy="706.500" r="3" />
      </g>
      <path d="M773 590v6M740.500 704v5" stroke="#5a3c9a" />
      <g fill="#7a4fb0">
        <circle cx="1006.500" cy="480.500" r="1.800" /><circle cx="1042.500" cy="551.500" r="1.800" /><circle cx="1100" cy="666.500" r="1.800" />
        <circle cx="648.500" cy="504.500" r="1.800" /><circle cx="743.500" cy="455.500" r="1.800" /><circle cx="845.500" cy="633" r="1.800" />
        <circle cx="914" cy="653" r="1.800" /><circle cx="965.500" cy="588" r="1.800" />
      </g>
      <rect x="512.500" y="272.500" width="593" height="546" fill="none" stroke="#4f7bd8" />
      {handles.map(([x, y]) => (
        <rect key={x + "," + y} x={x - 2.500} y={y - 2.500} width="5" height="5" fill="#fff" stroke="#4f7bd8" />
      ))}
    </svg>
  );
}

/* ---------- document area ---------- */

function StatusBar() {
  return (
    <div className="flex h-[17px] shrink-0 items-center bg-[#535353] pt-[2px] text-[10px] leading-[14px] text-[#dadada]">
      <DropDown label="Zoom level" value="12.5%" className="ml-[3px] h-full w-[68px] bg-[#454545]" />
      <span className="flex w-[43px] items-center justify-center gap-[9px] text-[#7a7a7a]">
        <svg width="8" height="9" fill="currentColor" aria-hidden="true"><path d="M0 0h1v9H0zM8 0v9L2 4.500z" /></svg>
        <svg width="6" height="9" fill="currentColor" aria-hidden="true"><path d="M6 0v9L0 4.500z" /></svg>
      </span>
      <DropDown label="Artboard" value="1" className="h-full w-[57px] bg-[#454545]" />
      <span className="flex w-[44px] items-center justify-center gap-[9px] text-[#7a7a7a]">
        <svg width="6" height="9" fill="currentColor" aria-hidden="true"><path d="M0 0v9l6-4.500z" /></svg>
        <svg width="8" height="9" fill="currentColor" aria-hidden="true"><path d="M7 0h1v9H7zM0 0v9l6-4.500z" /></svg>
      </span>
      <span className="w-[198px] border-l border-[#494949] text-center">Selection</span>
      <button type="button" aria-label="Status options" className="flex w-[20px] justify-center"><svg width="6" height="9" fill="currentColor" aria-hidden="true"><path d="M0 0v9l6-4.500z" /></svg></button>
      <div className="flex h-full flex-1 items-center bg-[#4a4a4a] pr-1 text-[#8a8a8a]">
        <span className="pl-[3px]"><Chevron dir="left" /></span>
        <span className="flex flex-1 justify-center pl-3"><span className="h-[13px] w-[26px] rounded-full bg-[#626262]" /></span>
        <Chevron dir="right" />
      </div>
      <span className="h-full w-[17px] bg-[#535353]" />
    </div>
  );
}

function DocumentArea() {
  return (
    <main className="flex min-w-0 flex-1 flex-col border-r-2 border-[#3e3e3e] bg-[#424242]">
      <div className="flex h-[30px] shrink-0 border-b border-[#3c3c3c]">
        <div className="flex w-[227px] items-center justify-between bg-[#535353] pl-[9px] pr-[6px] text-[11px] font-semibold text-[#f2f2f2]">
          <span>bundle.svg @ 12.5 % (RGB/Preview)</span>
          <button type="button" aria-label="Close document"><svg width="7" height="7" stroke="#eee" strokeWidth="2" aria-hidden="true"><path d="m0 0 7 7M7 0 0 7" /></svg></button>
        </div>
      </div>
      <div className="flex min-h-0 flex-1">
        <div className="min-w-0 flex-1 overflow-hidden bg-[#5e5e5e] pl-[340px] pt-[59px]"><Artwork /></div>
        <div className="flex w-[17px] flex-col items-center bg-[#4a4a4a] py-1 text-[#a0a0a0]">
          <Chevron dir="up" />
          <span className="flex flex-1 items-center"><span className="h-[25px] w-[14px] rounded-full bg-[#626262]" /></span>
          <Chevron />
        </div>
      </div>
      <StatusBar />
    </main>
  );
}

/* ---------- icon dock ---------- */

const dock: [string, React.ReactNode][][] = [
  [
    ["Color", <path key="a" fillRule="evenodd" d="M9 5.500c2 0 1-4 5-4s5.500 4 5.500 8.500-4 7-9.500 7S.5 15 .5 11 4 5.500 9 5.500zM3 9.500h2.500v2.500H3zM5 13h2.500v2.500H5zM10 13.500h2.500V16H10zM14.500 11.500H17V14h-2.500zM15 6h2.500v2.500H15z" {...F} />],
    ["Color Guide", <path key="a" d="M2.500 1v17h15C17.500 9 11 2 2.500 1z" fill="url(#ramp)" />],
  ],
  [
    ["Swatches", <g key="a"><path d="M1.500 4h17v12h-17z" fill="#777" /><path d="M7 4h6v6H7z" {...F} /><path d="M1.500 10h17M7 4v12M13 4v12" /></g>],
    ["Brushes", <path key="a" d="M5 12h10v7H5zM9 1h2v10H9zM2 2l5 9H5L1 5zM17 4l2 2-5 5h-2zM7 3l2 6M13 2l-1 8" fill="currentColor" strokeWidth="1" />],
    ["Symbols", <g key="a" {...F}><circle cx="10" cy="5" r="4" /><circle cx="5" cy="11" r="4" /><circle cx="15" cy="11" r="4" /><path d="M9 8h2v8l3 2v1H6v-1l3-2z" /></g>],
  ],
  [
    ["Stroke", <path key="a" d="M1 4h18v1H1zM1 9h18v2H1zM1 14h18v3H1z" {...F} />],
    ["Gradient", <rect key="a" x="1.500" y="4" width="17" height="12" fill="url(#ramp)" />],
    ["Transparency", <g key="a"><circle cx="7.500" cy="7" r="7" {...F} /><circle cx="13" cy="12.500" r="6" fill="#8a8a8a" /></g>],
  ],
  [
    ["Appearance", <g key="a"><circle cx="10" cy="10" r="6" {...F} /><circle cx="10" cy="10" r="8.500" strokeDasharray="2 2" /></g>],
    ["Graphic Styles", <path key="a" d="M5 9V2h14v13H9M1 9h6v6H1zM4 15v3h6v-6H7" />],
  ],
  [
    ["Asset Export", <path key="a" d="M10 3H2v15h15v-8M9 11l9-9M12 1.500h6.500V8" strokeWidth="2" />],
    ["Artboards", <path key="a" d="M5 12H1V2h11v5M6 8h13v10H6z" />],
  ],
  [["Libraries", <g key="a"><path d="M5 3h7l3 4v6l-3 4H5l-4-4V7z" {...F} /><path d="M10 1.500c10 0 10 17 0 17" strokeWidth="1.500" /><circle cx="10" cy="2" r="2" {...F} /><circle cx="17.500" cy="10" r="2" {...F} /><circle cx="10" cy="18" r="2" {...F} /></g>]],
  [
    ["Character", <path key="a" d="M2 17 7.500 4 13 17M4 12.500h7M18 1v18" strokeWidth="2" />],
    ["Paragraph", <path key="a" d="M9 10a4.500 4.500 0 0 1 0-9h8v17h-2V3h-2v15h-2V10z" {...F} />],
    ["OpenType", <g key="a"><ellipse cx="10.500" cy="10" rx="6" ry="8" strokeWidth="2" stroke="#999" /><path d="M12 2C5 0 2 7 4 13c1 4 4 6 7 5-5-4-4-13 1-16z" {...F} /></g>],
  ],
];

function IconDock() {
  return (
    <aside className="flex w-[39px] shrink-0 flex-col border-r-2 border-[#404040] bg-[#4c4c4c]">
      <div className="flex h-[13px] shrink-0 items-center justify-end bg-[#454545] pr-[6px]"><Collapse /></div>
      {dock.map((group, i) => (
        <div key={i} className="flex flex-col items-center border-b border-[#3c3c3c] bg-[#535353] pb-[3px] text-[#c8c8c8]">
          <div className="flex h-[9px] pt-[3px]"><Grip /></div>
          {group.map(([name, art]) => (
            <button type="button" key={name} aria-label={name} className="flex h-7 w-full items-center justify-center"><Icon size={18}>{art}</Icon></button>
          ))}
        </div>
      ))}
    </aside>
  );
}

/* ---------- properties ---------- */

function PropField({ label, value }: { label: string; value: string }) {
  const id = "prop-" + label;
  return (
    <span className="flex items-center">
      <label htmlFor={id} className="w-4">{label}:</label>
      <input id={id} defaultValue={value} className={"h-[19px] w-[56px] pl-[3px] text-[#f2f2f2] outline-none " + fieldBox} />
    </span>
  );
}

function MoreOptions({ label }: { label: string }) {
  return <button type="button" aria-label={label} className="flex self-end pr-2"><Dots /></button>;
}

function PropertiesPanel() {
  return (
    <section className="flex shrink-0 flex-col border-b-2 border-[#3e3e3e]">
      <div className="flex h-[27px] bg-[#424242]">
        <h2 className="flex w-[67px] items-center justify-center bg-[#535353] text-[10px] font-bold text-[#f2f2f2]">Properties</h2>
      </div>
      <div className="flex">
        <div className="flex min-w-0 flex-1 flex-col text-[10px] text-[#cdcdcd]">
          <div className="h-[34px] border-b border-[#474747] pl-[10px] pt-[10px] text-[10px] leading-4">Group</div>
          <div className="flex h-[124px] flex-col border-b border-[#474747] pl-[10px] pt-[10px]">
            <h3 className="text-[10px] leading-4">Transform</h3>
            <div className="mt-1 flex items-center">
              <button type="button" aria-label="Reference point" className="text-[#c6c6c6]"><RefPoint /></button>
              <div className="ml-[9px] grid grid-cols-2 gap-x-4 gap-y-[7px]">
                <PropField label="X" value="1082.964 p" />
                <PropField label="W" value="1626.7917" />
                <PropField label="Y" value="1076.6271" />
                <PropField label="H" value="1495.2918" />
              </div>
              <button type="button" aria-label="Link dimensions" className="ml-[14px] text-[#b0b0b0]">
                <Icon size={18}><path d="M6 9V5a4 4 0 0 1 8 0v4M6 11v4a4 4 0 0 0 8 0v-4M10 6v8M2 3l16 14" /></Icon>
              </button>
            </div>
            <div className="mt-[7px] flex h-[19px] items-center">
              <span className="ml-[24px] flex w-[19px] items-center"><Icon size={14}><path d="M13 2 2 16h17M10 6c4 2 5 6 5 10" strokeWidth="2" /></Icon>:</span>
              <DropDown label="Rotate" value="0°" className={"h-[19px] w-[55px] " + fieldBox} />
              <span className="ml-[43px] flex gap-2">
                <button type="button" aria-label="Flip horizontal"><Icon size={16}><path d="M1 4v12l6-6z" /><path d="M19 3v14l-6-7z" {...F} /><path d="M10 1v18" strokeDasharray="2 2" /></Icon></button>
                <button type="button" aria-label="Flip vertical"><Icon size={16}><path d="M4 19h12l-6-6z" /><path d="M3 1h14l-7 6z" {...F} /><path d="M1 10h18" strokeDasharray="2 2" /></Icon></button>
              </span>
            </div>
            <span className="mt-[10px] flex flex-col"><MoreOptions label="Transform options" /></span>
          </div>
          <div className="flex h-[171px] flex-col border-b border-[#474747] pl-[10px] pt-[11px]">
            <h3 className="text-[10px] leading-4">Appearance</h3>
            <div className="mt-[10px] flex h-[18px] items-center">
              <button type="button" aria-label="Fill" className="flex h-[18px] w-[18px] items-center justify-center border border-[#303030] text-[13px] text-[#e0e0e0]">?</button>
              <span className="ml-3">Fill</span>
            </div>
            <div className="mt-[11px] flex h-[19px] items-center">
              <button type="button" aria-label="Stroke color">
                <svg width="18" height="18" fill="none" stroke="#2e2e2e" aria-hidden="true"><path d="M.5 .5h17v17H.5zM5.500 5.500h7v7h-7z" /><path d="M2 2h3v2M13 2h3v2M2 14h3v2M13 14h3v2" stroke="#ddd" /></svg>
              </button>
              <label htmlFor="prop-stroke" className="ml-3 w-[50px] font-semibold text-[#f0f0f0]"><span className="border-b border-dotted">Stroke</span></label>
              <span className={"flex h-[19px] w-[68px] " + fieldBox}>
                <Spinner />
                <input id="prop-stroke" className="w-0 flex-1 border-x border-[#5a5a5a] bg-transparent outline-none" />
                <button type="button" aria-label="Stroke weights" className="flex w-[17px] items-center justify-center text-[#f0f0f0]"><Chevron /></button>
              </span>
            </div>
            <div className="mt-[10px] flex h-[19px] items-center">
              <svg width="18" height="18" aria-hidden="true"><path d="M1.500 1.500h15v15h-15z" fill="#6e6e6e" stroke="#bbb" /><path d="M2 2h4v4H2zM10 2h4v4h-4zM6 6h4v4H6zM2 10h4v4H2zM10 10h4v4h-4z" fill="#505050" /></svg>
              <label htmlFor="prop-opacity" className="ml-3 w-[50px] font-semibold text-[#f0f0f0]"><span className="border-b border-dotted">Opacity</span></label>
              <span className={"flex h-[19px] w-[68px] " + fieldBox}>
                <input id="prop-opacity" defaultValue="100%" className="w-0 flex-1 bg-transparent pl-[3px] text-[#f2f2f2] outline-none" />
                <button type="button" aria-label="Opacity slider" className="flex w-[17px] items-center justify-center border-l border-[#5a5a5a] text-[#f0f0f0]"><Chevron dir="right" /></button>
              </span>
            </div>
            <button type="button" aria-label="Effects" className="ml-[7px] mt-[14px] self-start text-[13px] italic leading-4">fx.</button>
            <span className="mt-4 flex flex-col"><MoreOptions label="Appearance options" /></span>
          </div>
          <div className="flex h-[86px] flex-col border-b border-[#474747] pl-[10px] pt-3">
            <h3 className="text-[10px] leading-4">Align</h3>
            <div className="mt-3 flex h-5 items-center">
              <span className="ml-1 mr-[11px]"><AlignTo /></span>
              <span className="flex gap-3">
                {["left", "hcenter", "right", "top", "vcenter", "bottom"].map((k) => <AlignButton key={k} kind={k} />)}
              </span>
            </div>
            <span className="mt-[14px] flex flex-col"><MoreOptions label="Align options" /></span>
          </div>
          <div className="h-[40px] pl-[10px] pt-[10px] text-[10px] leading-4">Pathfinder</div>
        </div>
        <div className="flex w-[12px] flex-col items-center bg-[#4a4a4a] pt-[2px] text-[#b0b0b0]">
          <Chevron dir="up" />
          <span className="mt-1 h-[310px] w-[10px] rounded-full bg-[#626262]" />
        </div>
      </div>
    </section>
  );
}

/* ---------- layers ---------- */

const groupThumbs: { n: number; ri: number; hole?: boolean; red?: boolean }[] = [
  { n: 16, ri: 6 }, { n: 14, ri: 5 }, { n: 24, ri: 7, hole: true }, { n: 8, ri: 3, red: true }, { n: 24, ri: 7 },
  { n: 16, ri: 6 }, { n: 24, ri: 7 }, { n: 10, ri: 4 }, { n: 24, ri: 7 }, { n: 13, ri: 5 }, { n: 14, ri: 6 },
  { n: 8, ri: 3, red: true }, { n: 12, ri: 5 }, { n: 18, ri: 6 }, { n: 24, ri: 7, hole: true }, { n: 24, ri: 7 },
  { n: 5, ri: 2, red: true }, { n: 13, ri: 5 }, { n: 24, ri: 7, hole: true }, { n: 24, ri: 7 },
];

function Eye() {
  return (
    <button type="button" aria-label="Toggle visibility" className="flex w-[22px] justify-center">
      <svg width="12" height="9" aria-hidden="true"><path d="M0 4.500C2.500-.5 9.500-.5 12 4.500 9.500 9 2.500 9 0 4.500z" fill="#c6c6c6" /><circle cx="6" cy="4" r="2.500" fill="#4a4a4a" /><circle cx="6.500" cy="4" r="1" fill="#ccc" /></svg>
    </button>
  );
}

function Marker() {
  return <span className="ml-[4px] h-2 w-2 border border-[#1c2a50] bg-[#5a86f0]" />;
}

function LayersPanel() {
  return (
    <section className="flex min-h-0 flex-1 flex-col">
      <div className="flex h-[27px] shrink-0 items-center justify-between bg-[#424242] pr-[6px]">
        <h2 className="flex h-full w-[48px] items-center justify-center bg-[#535353] text-[10px] font-bold text-[#f2f2f2]">Layers</h2>
        <button type="button" aria-label="Layers menu"><svg width="10" height="8" stroke="#bbb" aria-hidden="true"><path d="M0 .5h10M0 4h10M0 7.500h10" /></svg></button>
      </div>
      <div className="ml-[5px] mr-[6px] mt-[6px] flex min-h-0 flex-1">
        <ul className="min-w-0 flex-1 overflow-hidden text-[11px] text-[#dcdcdc]">
          <li className="flex h-[21px] items-center border-b border-[#5e5e5e] bg-[#4f6780]">
            <Eye />
            <span className="ml-[22px] h-[18px] w-[3px] bg-[#5b86f2]" />
            <Chevron className="ml-[8px] text-white" />
            <svg width="18" height="18" viewBox="0 0 18 18" className="ml-[9px]" aria-hidden="true">
              <path d="M.5 .5h17v17H.5z" fill="#fff" stroke="#111" />
              <g fill="#a8a8a8" stroke="#4a4a4a" strokeWidth=".8">
                <circle cx="8.500" cy="4.500" r="2.600" /><circle cx="12.500" cy="5.500" r="2" /><circle cx="4" cy="8.500" r="2.300" /><circle cx="7" cy="12.500" r="2.500" />
                <circle cx="13.500" cy="12.500" r="2.500" /><circle cx="9.500" cy="9" r="3" /><circle cx="10.500" cy="14.500" r="1.800" />
              </g>
            </svg>
            <span className="ml-[5px] flex-1">Layer 1</span>
            <span className="h-2 w-2 rounded-full border border-[#d0d0d0]" />
            <span className="ml-[3px] mr-[3px] flex"><Marker /></span>
            <svg width="5" height="5" className="self-start" aria-hidden="true"><path d="M0 0h5v5z" fill="#ddd" /></svg>
          </li>
          {groupThumbs.map((t, i) => (
            <li key={i} className="flex h-[21px] items-center border-b border-[#606060]">
              <span className="flex h-full items-center border-r border-[#5c5c5c]"><Eye /></span>
              <span className="ml-[21px] h-[18px] w-[3px] bg-[#5b86f2]" />
              <Chevron dir="right" className="ml-[29px] text-white" />
              <svg width="18" height="18" className="ml-[11px]" aria-hidden="true">
                <path d="M.5 .5h17v17H.5z" fill="#fff" stroke="#111" />
                <path d={gearPath(9, 9, 7.5, t.ri, t.n)} fill="#d0d0d0" stroke="#888" strokeWidth=".8" />
                <circle cx="9" cy="9" r={t.hole ? 5 : 1} fill={t.hole ? "#fff" : "#999"} stroke={t.hole ? "#999" : "none"} />
                {t.red && <circle cx="15" cy="7.500" r="1.500" fill="#d83060" />}
              </svg>
              <span className="ml-[5px] flex-1">&lt;Group&gt;</span>
              <span className="flex h-full items-center border-l border-[#5c5c5c] pl-1">
                <svg width="13" height="13" fill="none" stroke="#c4c4c4" aria-hidden="true"><circle cx="6.500" cy="6.500" r="5.800" /><circle cx="6.500" cy="6.500" r="3.300" /></svg>
              </span>
              <span className="mr-2 flex"><Marker /></span>
            </li>
          ))}
        </ul>
        <div className="flex w-[12px] flex-col items-center bg-[#484848] pt-px text-[#a8a8a8]">
          <Chevron dir="up" />
          <span className="mt-[2px] h-[370px] w-[9px] rounded-full bg-[#626262]" />
          <Chevron className="mb-px mt-auto" />
        </div>
      </div>
      <footer className="flex h-[21px] shrink-0 items-center pl-[5px] pr-[27px] text-[10px] text-[#d0d0d0]">
        <span className="flex-1">1 Layer</span>
        <span className="flex gap-[12px] text-[#c0c0c0]">
          <button type="button" aria-label="Collect for export"><Icon size={14}><path d="M9 4H2v14h14v-7M9 11l9-9M12 1.500h6.500V8" /></Icon></button>
          <button type="button" aria-label="Locate object"><Icon size={14}><circle cx="8" cy="8" r="6" strokeWidth="2" /><path d="m12.500 12.500 6 6" strokeWidth="3" /></Icon></button>
          <button type="button" aria-label="Make clipping mask"><Icon size={14}><path d="M2 2h11v11H2zM7 7h11v11H7z" /><path d="M7 7h6v6H7z" {...F} /></Icon></button>
          <button type="button" aria-label="Create sublayer"><Icon size={14}><path d="M7 4h12v12H7zM13 7v6M10 10h6M1 1v6h4M3 4.500 5.500 7 3 9.500" /></Icon></button>
          <button type="button" aria-label="Create layer"><Icon size={14}><path d="M2 2h16v16H2zM10 6v8M6 10h8" /></Icon></button>
          <button type="button" aria-label="Delete" className="text-[#6c6c6c]"><Icon size={14}><path d="M2 4h16M7 4V1.500h6V4M4 4v14.500h12V4M8 7v9M12 7v9" /></Icon></button>
        </span>
      </footer>
    </section>
  );
}

/* ---------- taskbar ---------- */

const appIcons: [string, React.ReactNode][] = [
  ["Chrome", <g key="a"><circle cx="12" cy="12" r="11.500" fill="#e8e8e8" /><path d="M12 12 2 6.200A11.500 11.500 0 0 1 22 6.200H12z" fill="#d84437" /><path d="M12 12 2 6.200A11.500 11.500 0 0 0 11 23.500L16.500 15z" fill="#1ea362" /><path d="M12 6.200h10A11.500 11.500 0 0 1 11 23.500L17 14.500z" fill="#fcc934" /><circle cx="12" cy="12" r="5.300" fill="#fff" /><circle cx="12" cy="12" r="4.300" fill="#4a88ee" /></g>],
  ["File Explorer", <g key="a"><path d="M1 3h10l2 2h-2v4H1z" fill="#d8a200" /><path d="M1 6h20v2h2v13H1z" fill="#ffd75e" /><path d="M5 14h14v8h-4v-4H9v4H5z" fill="#3d8fd0" /></g>],
  ["Photos", <g key="a"><path d="M1 1h22v22H1z" fill="#29a5e3" /><path d="M1 17 9 8l14 13v2H1z" fill="#174a80" /><path d="m13 12 3-3 7 6v6z" fill="#2c79b8" /><circle cx="17" cy="6" r="2" fill="#fff" /></g>],
  ["Messenger", <g key="a"><path d="M11 1C4 1 0 5.500 0 11c0 3.500 1.500 6 4 8v4l4-2c8 1.500 14-3.500 14-10C22 5.500 18 1 11 1z" fill="url(#msg)" /><path d="m4 14 6-6 3 3 5-3-6 6-3-3z" fill="#fff" /><circle cx="18" cy="17" r="8" fill="#ff0d0d" /><text x="18" y="21" textAnchor="middle" fontSize="11" fill="#fff">1</text></g>],
  ["Terminal", <g key="a"><path d="M0 3h24v18H0z" fill="#404040" /><path d="M8 1h16v4H8z" fill="#6d6d6d" /><path d="m3 8 5 4-5 4M11 17h7" fill="none" stroke="#e6e6e6" strokeWidth="2.200" /></g>],
  ["Performance Monitor", <g key="a"><path d="M1 7h5v12H3z" fill="#eee" stroke="#888" /><path d="m6 4 16 1v12H5z" fill="#f6f6f6" stroke="#999" /><path d="m7 12 2.500-4 3 6 2-5 2 5 3.500-3" fill="none" stroke="#2789c0" strokeWidth="1.500" /><ellipse cx="13" cy="20" rx="6" ry="2.500" fill="#e2e2e2" stroke="#999" /></g>],
  ["Spotify", <g key="a"><circle cx="12" cy="12" r="11" fill="#1ed760" /><path d="M5 8.500c5-1.500 10-1 14 1.300M6 12.500c4-1.200 8-.8 11.500 1.200M6.500 16c3.500-.9 6.500-.6 9.500 1" fill="none" stroke="#0d2e18" strokeWidth="2" strokeLinecap="round" /></g>],
  ["Blender", <g key="a"><path d="M12 3 23 12c2 6-3 9.500-8 9.500S7 18 7 15l-5 3.500-1.500-2L9 10H3V8h9L9.500 5z" fill="#ea7600" /><circle cx="15" cy="14" r="5.300" fill="#fff" /><circle cx="15" cy="14" r="3" fill="#265787" /></g>],
  ["Illustrator", <g key="a"><rect x="2" y="1" width="20" height="21" rx="4" fill="#330000" /><text x="12" y="16.500" textAnchor="middle" fontSize="12" fontWeight="700" fill="#ff9a00">Ai</text></g>],
  ["Edge", <g key="a"><circle cx="12" cy="12" r="11.500" fill="#1b7fd0" /><path d="M.6 11C1 4.500 6 .5 12.500.5c6.500 0 11 4.500 11 9.500 0 4-3 6-6.500 6-3 0-4-1-3-2.500C15.500 10 12.500 6.500 8.500 6.500c-4 0-7 2-7.900 4.500z" fill="#3cc8b0" /><path d="M.6 11C3 6 12 5 14 10.500c.3 1.500-.3 2.200-.6 3-3-1.500-5 2-2.400 5.500 2 2.500 6 3 10 0A11.500 11.500 0 0 1 .6 11z" fill="#1759ae" /><path d="M14 10.500c.3 1.500-.9 2.500-.6 3.500.4 1.500 2 2 4 2 2.500 0 4.600-1 5.600-2.500-.5 2-1 4-2 5.500-4 3-9 2-10.500-1-1.500-3.500 1-6 3.500-7.500z" fill="#d5eaf4" /></g>],
  ["Discord", <g key="a"><rect x="2" y="0" width="20" height="20" rx="3" fill="#7289da" /><path d="m16 18 6 5v-5z" fill="#7289da" /><path d="M7 6c3-1 7-1 10 0 2 3 2 6 2 8l-4 1-1-1.500h-4L9 15l-4-1c0-2 0-5 2-8z" fill="#fff" /><circle cx="9.500" cy="10.500" r="1.500" fill="#7289da" /><circle cx="18" cy="18" r="7.500" fill="#e8484c" /><text x="18" y="22" textAnchor="middle" fontSize="10" fill="#fff">9+</text></g>],
  ["Photoshop", <g key="a"><rect x="2" y="1" width="20" height="21" rx="4" fill="#001d33" /><text x="12" y="16.500" textAnchor="middle" fontSize="12" fontWeight="700" fill="#31a8ff">Ps</text></g>],
];

function Taskbar() {
  return (
    <footer className="flex h-10 shrink-0 items-stretch bg-[#d5d5d5] text-[#1a1a1a]">
      <button type="button" aria-label="Start" className="flex w-[50px] items-center justify-center pr-[2px]">
        <svg width="16" height="16" viewBox="0 0 16 16" aria-hidden="true"><path d="M0 2.300 6.500 1.400v6.100H0zM7.500 1.200 16 0v7.500H7.500zM0 8.500h6.500v6.100L0 13.700zM7.500 8.500H16V16l-8.500-1.200z" /></svg>
      </button>
      {appIcons.map(([name, art], i) => (
        <button type="button" key={name} aria-label={name} className="flex w-[49px] justify-center">
          <span className={"flex h-full flex-col items-center border-b-2 border-[#4a4a4a] pt-2 " + (i === 1 ? "w-[45px] bg-[#f1f1f1]" : "w-10")}>
            <svg width="24" height="24" viewBox="0 0 24 24" className="overflow-visible" aria-hidden="true">{art}</svg>
          </span>
        </button>
      ))}
      <div className="ml-auto mr-[8px] flex flex-col items-center justify-center text-[11px] leading-[18px]">
        <span>12:48:22 AM</span>
        <span>18/5/2021</span>
      </div>
    </footer>
  );
}

export default function App() {
  return (
    <div className="flex h-screen flex-col overflow-hidden bg-[#535353] font-['Open_Sans','Noto_Sans',sans-serif]">
      <svg width="0" height="0" className="absolute" aria-hidden="true">
        <defs>
          <linearGradient id="ramp"><stop offset="0" stopColor="#333" /><stop offset="1" stopColor="#e8e8e8" /></linearGradient>
          <linearGradient id="msg" x1="0" y1="1" x2="1" y2="0"><stop offset="0" stopColor="#0a84ff" /><stop offset=".5" stopColor="#a040ff" /><stop offset="1" stopColor="#ff6070" /></linearGradient>
        </defs>
      </svg>
      <MenuBar />
      <ControlBar />
      <div className="flex min-h-0 flex-1">
        <ToolPanel />
        <DocumentArea />
        <IconDock />
        <div className="flex w-[252px] shrink-0 flex-col">
          <div className="flex h-[13px] shrink-0 items-center justify-end bg-[#454545] pr-[6px]"><Collapse right /></div>
          <PropertiesPanel />
          <LayersPanel />
        </div>
      </div>
      <Taskbar />
    </div>
  );
}
